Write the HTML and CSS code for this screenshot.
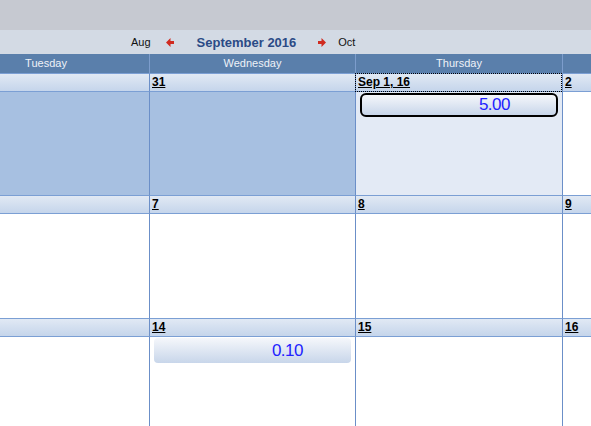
FILE: index.html
```html
<!DOCTYPE html>
<html lang="en">
<head>
    <meta charset="UTF-8">
    <title>Month Calendar</title>
    <link rel="stylesheet" href="styles.css">
</head>
<body>
    <div class="topbar"></div>
    <div class="nav">
        <span class="nav-month">Aug</span>
        <svg class="arrow arrow-left" width="8" height="9" viewBox="0 0 8 9">
            <path d="M0 4.5 L4.5 0 L4.5 3 L8 3 L8 6 L4.5 6 L4.5 9 Z" fill="#d02b20"/>
        </svg>
        <span class="nav-title">September 2016</span>
        <svg class="arrow arrow-right" width="8" height="9" viewBox="0 0 8 9">
            <path d="M8 4.5 L3.5 0 L3.5 3 L0 3 L0 6 L3.5 6 L3.5 9 Z" fill="#d02b20"/>
        </svg>
        <span class="nav-month">Oct</span>
    </div>
    <div class="grid">
        <div class="day-name">Tuesday</div>
        <div class="day-name">Wednesday</div>
        <div class="day-name">Thursday</div>
        <div class="day-name"></div>

        <!-- week 1 -->
        <div class="band"></div>
        <div class="band"><u>31</u></div>
        <div class="band selected"><u>Sep 1, 16</u></div>
        <div class="band"><u>2</u></div>
        <div class="cell other"></div>
        <div class="cell other"></div>
        <div class="cell today">
            <div class="event active">5.00</div>
        </div>
        <div class="cell"></div>

        <!-- week 2 -->
        <div class="band"></div>
        <div class="band"><u>7</u></div>
        <div class="band"><u>8</u></div>
        <div class="band"><u>9</u></div>
        <div class="cell"></div>
        <div class="cell"></div>
        <div class="cell"></div>
        <div class="cell"></div>

        <!-- week 3 -->
        <div class="band"></div>
        <div class="band"><u>14</u></div>
        <div class="band"><u>15</u></div>
        <div class="band"><u>16</u></div>
        <div class="cell"></div>
        <div class="cell">
            <div class="event">0.10</div>
        </div>
        <div class="cell"></div>
        <div class="cell"></div>
    </div>
</body>
</html>
```

FILE: styles.css
```css
body {
    margin: 0;
    font-family: "Liberation Sans", Arial, sans-serif;
    background-color: #ffffff;
    overflow: hidden;
    width: 591px;
    height: 426px;
}
.topbar {
    height: 30px;
    background-color: #c6c9d1;
}
.nav {
    height: 24px;
    background-color: #d3dae4;
    display: flex;
    align-items: center;
    padding-left: 131px;
    font-size: 11px;
    color: #111;
}
.arrow {
    display: block;
}
.arrow-left {
    margin-left: 15px;
}
.arrow-right {
    margin-right: 12px;
}
.nav-title {
    font-size: 13px;
    font-weight: bold;
    color: #2b4a86;
    margin: 1px 22px 0 23px;
}
.grid {
    display: grid;
    margin-left: -57px;
    width: 648px;
    height: 372px;
    grid-template-columns: 206px 206px 207px 1fr;
    grid-template-rows: 19px 19px 103px 19px 104px 19px 1fr;
}
.day-name {
    background-color: #5a7fab;
    color: #eef2f8;
    font-size: 11px;
    text-align: center;
    line-height: 19px;
    border-left: 1px solid #7d9dcc;
}
.day-name:first-child {
    border-left: none;
}
.band {
    background: linear-gradient(#e1e9f4, #c5d5eb);
    border-top: 1px solid #7b9fd4;
    border-bottom: 1px solid #7b9fd4;
    border-left: 1px solid #6b8fc8;
    font-size: 12px;
    font-weight: bold;
    line-height: 16px;
    padding-left: 2px;
    color: #000;
    box-sizing: border-box;
}
.band:nth-child(4n+1) {
    border-left: none;
}
.band.selected {
    outline: 1px dotted #000;
    outline-offset: -1px;
}
.cell {
    border-left: 1px solid #6b8fc8;
    background-color: #fff;
}
.cell:nth-child(4n+1) {
    border-left: none;
}
.cell.other {
    background-color: #a7c0e1;
}
.cell.today {
    background-color: #e3eaf5;
}
.event {
    margin: 1px 4px 0 4px;
    height: 25px;
    border-radius: 4px;
    background: linear-gradient(#f5f7fb, #c8d6ea);
    color: #2222ff;
    font-size: 17px;
    letter-spacing: -0.5px;
    line-height: 25px;
    text-align: right;
    padding-right: 48px;
}
.event.active {
    height: 20px;
    line-height: 20px;
    border: 2px solid #000;
    border-radius: 6px;
    padding-right: 46px;
}
```
